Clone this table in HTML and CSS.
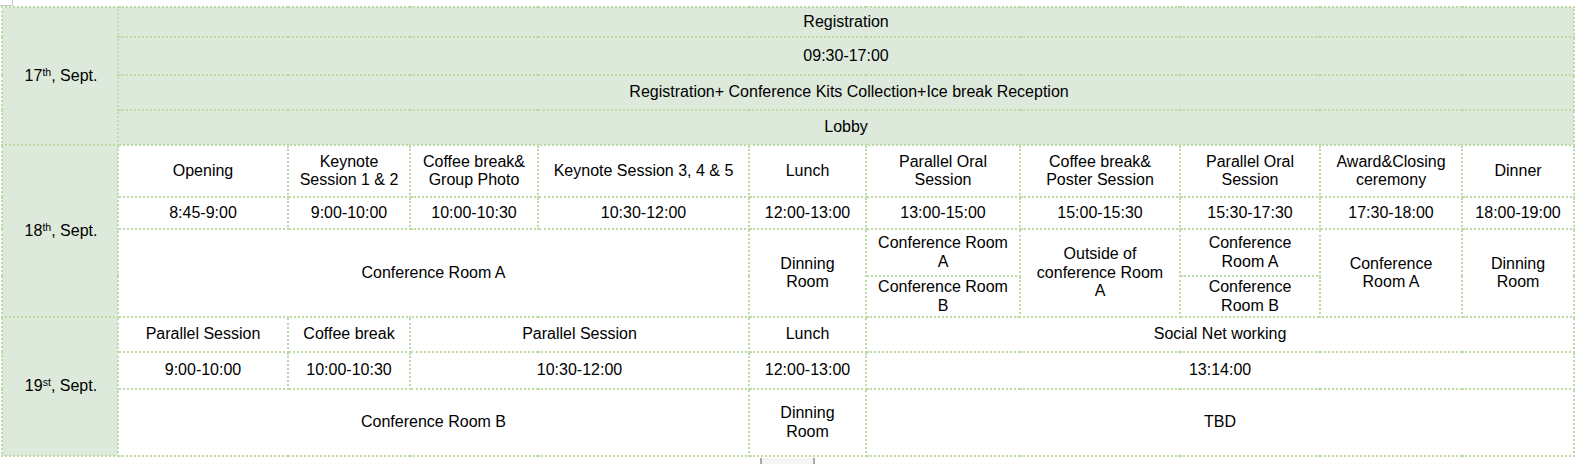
FILE: index.html
```html
<!DOCTYPE html>
<html lang="en">
<head>
<meta charset="utf-8">
<title>Conference Schedule</title>
<link rel="stylesheet" href="styles.css">
</head>
<body>
<div class="handle"></div>
<table class="schedule">
  <colgroup>
    <col class="c-date">
    <col class="c1"><col class="c2"><col class="c3"><col class="c4"><col class="c5">
    <col class="c6"><col class="c7"><col class="c8"><col class="c9"><col class="c10">
  </colgroup>
  <tbody>
    <tr class="h30 shaded">
      <td class="date" rowspan="4">17<sup>th</sup>, Sept.</td>
      <td colspan="10">Registration</td>
    </tr>
    <tr class="h38 shaded"><td colspan="10">09:30-17:00</td></tr>
    <tr class="h35 shaded"><td colspan="10" class="nudge">Registration+ Conference Kits Collection+Ice break Reception</td></tr>
    <tr class="h35 shaded"><td colspan="10">Lobby</td></tr>

    <tr class="h52">
      <td class="date" rowspan="4">18<sup>th</sup>, Sept.</td>
      <td>Opening</td>
      <td>Keynote Session 1 &amp; 2</td>
      <td>Coffee break&amp; Group Photo</td>
      <td>Keynote Session 3, 4 &amp; 5</td>
      <td>Lunch</td>
      <td>Parallel Oral Session</td>
      <td>Coffee break&amp; Poster Session</td>
      <td>Parallel Oral Session</td>
      <td>Award&amp;Closing ceremony</td>
      <td>Dinner</td>
    </tr>
    <tr class="h32">
      <td>8:45-9:00</td>
      <td>9:00-10:00</td>
      <td>10:00-10:30</td>
      <td>10:30-12:00</td>
      <td>12:00-13:00</td>
      <td>13:00-15:00</td>
      <td>15:00-15:30</td>
      <td>15:30-17:30</td>
      <td>17:30-18:00</td>
      <td>18:00-19:00</td>
    </tr>
    <tr class="h47">
      <td colspan="4" rowspan="2">Conference Room A</td>
      <td rowspan="2">Dinning Room</td>
      <td>Conference Room A</td>
      <td rowspan="2" class="roomy">Outside of conference Room A</td>
      <td>Conference Room A</td>
      <td rowspan="2">Conference Room A</td>
      <td rowspan="2">Dinning Room</td>
    </tr>
    <tr class="h41">
      <td>Conference Room B</td>
      <td>Conference Room B</td>
    </tr>

    <tr class="h35">
      <td class="date" rowspan="3">19<sup>st</sup>, Sept.</td>
      <td>Parallel Session</td>
      <td>Coffee break</td>
      <td colspan="2">Parallel Session</td>
      <td>Lunch</td>
      <td colspan="5">Social Net working</td>
    </tr>
    <tr class="h37">
      <td>9:00-10:00</td>
      <td>10:00-10:30</td>
      <td colspan="2">10:30-12:00</td>
      <td>12:00-13:00</td>
      <td colspan="5">13:14:00</td>
    </tr>
    <tr class="h67">
      <td colspan="4">Conference Room B</td>
      <td>Dinning Room</td>
      <td colspan="5">TBD</td>
    </tr>
  </tbody>
</table>
<div class="scroll-tab"></div>
</body>
</html>
```
FILE: styles.css
```css
html, body {
  margin: 0;
  padding: 0;
  background: #ffffff;
}

body {
  font-family: "Liberation Sans", Arial, sans-serif;
  font-size: 16px;
  color: #000;
}

.handle {
  width: 12px;
  height: 5px;
  border-right: 1px solid #c4c4c4;
  border-bottom: 1px solid #c4c4c4;
}

.schedule {
  margin-left: 1px;
  width: 1574px;
  table-layout: fixed;
  border-collapse: collapse;
  border: 2px dotted #bcdba6;
}

.schedule td {
  border: 2px dotted #bcdba6;
  padding: 0 8px;
  text-align: center;
  vertical-align: middle;
  line-height: 1.15;
}

.schedule td.roomy {
  padding: 0 10px;
}

.schedule td.nudge {
  padding-left: 14px;
}

.schedule .date {
  padding-left: 10px;
}

.schedule .date,
.shaded td {
  background: #dde9db;
}

.schedule sup {
  font-size: 0.66em;
  line-height: 0;
  vertical-align: 0.5em;
}

.c-date { width: 116px; }
.c1 { width: 170px; }
.c2 { width: 122px; }
.c3 { width: 128px; }
.c4 { width: 211px; }
.c5 { width: 117px; }
.c6 { width: 154px; }
.c7 { width: 160px; }
.c8 { width: 140px; }
.c9 { width: 142px; }
.c10 { width: 112px; }

.h30 { height: 30px; }
.h32 { height: 32px; }
.h35 { height: 35px; }
.h37 { height: 37px; }
.h38 { height: 38px; }
.h41 { height: 41px; }
.h47 { height: 47px; }
.h52 { height: 52px; }
.h67 { height: 67px; }

.scroll-tab {
  margin: 1px 0 0 760px;
  width: 51px;
  height: 12px;
  background: #f4f4f4;
  border-left: 2px solid #a9a9a9;
  border-right: 2px solid #a9a9a9;
}
```
